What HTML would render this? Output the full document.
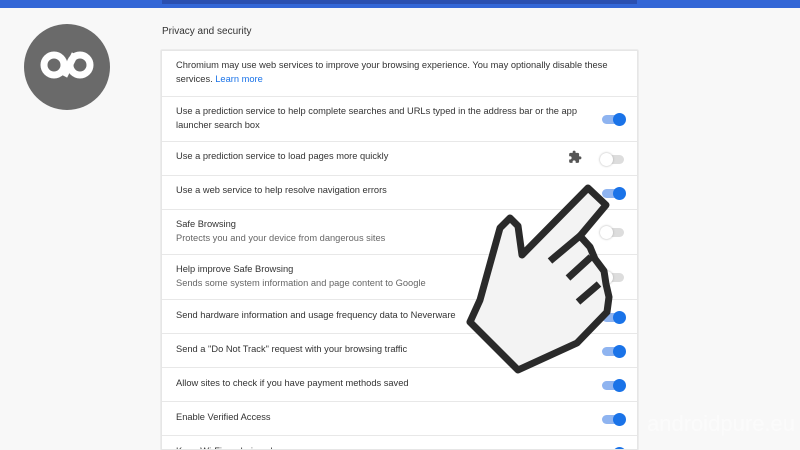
<!DOCTYPE html>
<html><head><meta charset="utf-8"><style>
*{margin:0;padding:0;box-sizing:border-box}
html,body{width:800px;height:450px;overflow:hidden}
body{background:#f8f8f8;font-family:"Liberation Sans",sans-serif;position:relative}
.bar{position:absolute;left:0;top:0;width:800px;height:8px;background:#3366d6}
.bar2{position:absolute;left:162px;top:0;width:475px;height:4px;background:#2a4fb0}
.title{position:absolute;left:162px;top:26px;font-size:10px;color:#333}
.card{position:absolute;left:161px;top:50px;width:477px;height:400px;overflow:hidden;background:#fff;box-shadow:0 0 1px #bbb;border:1px solid #e6e6e6}
.row{position:absolute;left:0;width:475px;border-top:1px solid #e8e8e8;font-size:9.3px;color:#333;padding-left:14px;line-height:13.5px}
.row .sub{color:#666}
.t{position:absolute;left:440px;width:22px;height:9px;border-radius:5px}
.t.on{background:#8fb4f0}
.t.on:after{content:"";position:absolute;right:-2px;top:-2px;width:13px;height:13px;border-radius:50%;background:#1a73e8}
.t.off{background:#ddd}
.t.off:after{content:"";position:absolute;left:-2px;top:-2px;width:13px;height:13px;border-radius:50%;background:#fff;box-shadow:0 0 2px #aaa}
.logo{position:absolute;left:24px;top:24px;width:86px;height:86px;border-radius:50%;background:#6a6a6a}
.wm{position:absolute;left:647px;top:411px;font-size:22px;color:#fff;opacity:.5}
</style></head><body>
<div class="bar"></div><div class="bar2"></div>
<div class="logo"><svg width="86" height="86"><g fill="none" stroke="#fff" stroke-width="7"><circle cx="30" cy="41" r="10"/><circle cx="56" cy="41" r="10"/></g><path d="M40 52 L51 30" stroke="#fff" stroke-width="7"/></svg></div>
<div class="title">Privacy and security</div>
<div class="card">
<div class="row" style="top:0;height:45px;border-top:none;padding-top:8px">Chromium may use web services to improve your browsing experience. You may optionally disable these<br>services. <span style="color:#1a73e8">Learn more</span></div>
<div class="row" style="top:45px;height:45px;padding-top:8px">Use a prediction service to help complete searches and URLs typed in the address bar or the app<br>launcher search box<div class="t on" style="top:18px"></div></div>
<div class="row" style="top:90px;height:34px;padding-top:8px">Use a prediction service to load pages more quickly<svg style="position:absolute;left:406px;top:8px" width="14" height="14" viewBox="0 0 24 24"><path fill="#555" d="M20.5 11H19V7c0-1.1-.9-2-2-2h-4V3.5a2.5 2.5 0 0 0-5 0V5H4c-1.1 0-2 .9-2 2v3.8h1.5a2.7 2.7 0 0 1 0 5.4H2V20c0 1.1.9 2 2 2h3.8v-1.5a2.7 2.7 0 0 1 5.4 0V22H17c1.1 0 2-.9 2-2v-4h1.5a2.5 2.5 0 0 0 0-5z"/></svg><div class="t off" style="top:13px"></div></div>
<div class="row" style="top:124px;height:34px;padding-top:8px">Use a web service to help resolve navigation errors<div class="t on" style="top:13px"></div></div>
<div class="row" style="top:158px;height:45px;padding-top:8px">Safe Browsing<br><span class="sub">Protects you and your device from dangerous sites</span><div class="t off" style="top:18px"></div></div>
<div class="row" style="top:203px;height:45px;padding-top:8px">Help improve Safe Browsing<br><span class="sub">Sends some system information and page content to Google</span><div class="t off" style="top:18px"></div></div>
<div class="row" style="top:248px;height:34px;padding-top:9px">Send hardware information and usage frequency data to Neverware<div class="t on" style="top:13px"></div></div>
<div class="row" style="top:282px;height:34px;padding-top:9px">Send a "Do Not Track" request with your browsing traffic<div class="t on" style="top:13px"></div></div>
<div class="row" style="top:316px;height:34px;padding-top:9px">Allow sites to check if you have payment methods saved<div class="t on" style="top:13px"></div></div>
<div class="row" style="top:350px;height:34px;padding-top:9px">Enable Verified Access<div class="t on" style="top:13px"></div></div>
<div class="row" style="top:384px;height:34px;padding-top:9px">Keep Wi-Fi on during sleep<div class="t on" style="top:13px"></div></div>
</div>
<svg style="position:absolute;left:0;top:0" width="800" height="450">
<path d="M588,188 L606,205 L580,236 L590,247 L595,259 L604,271 L606,284 L609,297 L607,312 L577,343 L518,370 L470,322 L480,300 L490,264 L500,228 L510,218 L518,226 L522,255 Z" fill="#f3f3f3" stroke="#2a2a2a" stroke-width="7" stroke-linejoin="round"/>
<path d="M550,261 L581,235 M568,278 L591,257 M578,302 L599,284" stroke="#2a2a2a" stroke-width="7" fill="none"/>
</svg>
<div class="wm">androidpure.eu</div>
</body></html>
